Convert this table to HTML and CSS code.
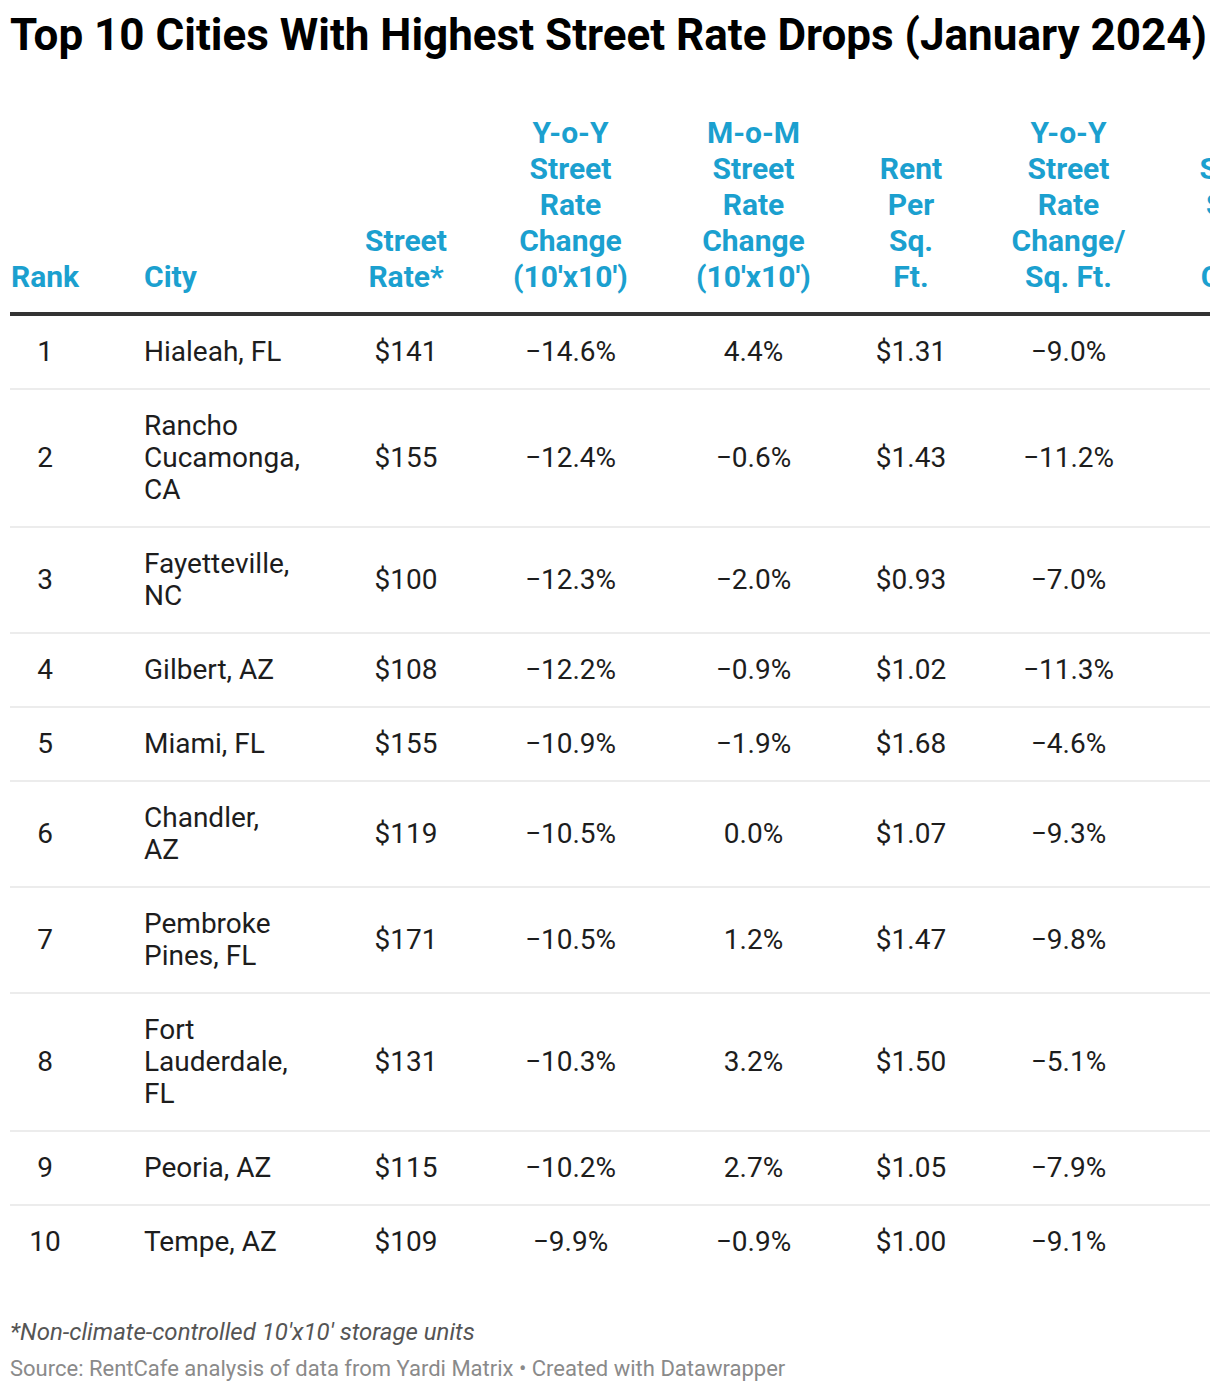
FILE: index.html
```html
<!DOCTYPE html>
<html lang="en">
<head>
<meta charset="utf-8">
<title>Top 10 Cities With Highest Street Rate Drops (January 2024)</title>
<link rel="stylesheet" href="styles.css">
</head>
<body>
<div class="chart">
  <h1 class="title">Top 10 Cities With Highest Street Rate Drops (January 2024)</h1>
  <div class="table-wrap">
    <table class="data">
      <thead>
        <tr>
          <th class="col-rank">Rank</th>
          <th class="col-city">City</th>
          <th class="col-rate">Street Rate*</th>
          <th class="col-yoy">Y-o-Y Street Rate Change (10'x10')</th>
          <th class="col-mom">M-o-M Street Rate Change (10'x10')</th>
          <th class="col-sqft">Rent Per Sq. Ft.</th>
          <th class="col-yoysq">Y-o-Y Street Rate Change/ Sq. Ft.</th>
          <th class="col-last">New Storage Supply % Change</th>
        </tr>
      </thead>
      <tbody>
        <tr><td>1</td><td>Hialeah, FL</td><td>$141</td><td>−14.6%</td><td>4.4%</td><td>$1.31</td><td>−9.0%</td><td>2.1%</td></tr>
        <tr><td>2</td><td>Rancho Cucamonga, CA</td><td>$155</td><td>−12.4%</td><td>−0.6%</td><td>$1.43</td><td>−11.2%</td><td>0.0%</td></tr>
        <tr><td>3</td><td>Fayetteville, NC</td><td>$100</td><td>−12.3%</td><td>−2.0%</td><td>$0.93</td><td>−7.0%</td><td>1.4%</td></tr>
        <tr><td>4</td><td>Gilbert, AZ</td><td>$108</td><td>−12.2%</td><td>−0.9%</td><td>$1.02</td><td>−11.3%</td><td>3.0%</td></tr>
        <tr><td>5</td><td>Miami, FL</td><td>$155</td><td>−10.9%</td><td>−1.9%</td><td>$1.68</td><td>−4.6%</td><td>1.8%</td></tr>
        <tr><td>6</td><td>Chandler, AZ</td><td>$119</td><td>−10.5%</td><td>0.0%</td><td>$1.07</td><td>−9.3%</td><td>2.6%</td></tr>
        <tr><td>7</td><td>Pembroke Pines, FL</td><td>$171</td><td>−10.5%</td><td>1.2%</td><td>$1.47</td><td>−9.8%</td><td>0.7%</td></tr>
        <tr><td>8</td><td>Fort Lauderdale, FL</td><td>$131</td><td>−10.3%</td><td>3.2%</td><td>$1.50</td><td>−5.1%</td><td>1.1%</td></tr>
        <tr><td>9</td><td>Peoria, AZ</td><td>$115</td><td>−10.2%</td><td>2.7%</td><td>$1.05</td><td>−7.9%</td><td>4.2%</td></tr>
        <tr><td>10</td><td>Tempe, AZ</td><td>$109</td><td>−9.9%</td><td>−0.9%</td><td>$1.00</td><td>−9.1%</td><td>2.3%</td></tr>
      </tbody>
    </table>
  </div>
  <p class="note">*Non-climate-controlled 10'x10' storage units</p>
  <p class="source">Source: RentCafe analysis of data from Yardi Matrix • Created with Datawrapper</p>
</div>
</body>
</html>
```

FILE: styles.css
```css
html, body {
  margin: 0;
  padding: 0;
  background: #ffffff;
}

body {
  font-family: Roboto, "Liberation Sans", Arial, sans-serif;
  color: #1d1d1d;
}

.chart {
  padding: 10px 10px 0 10px;
  width: 1200px;
}

.title {
  margin: 0;
  font-size: 44px;
  line-height: 50px;
  font-weight: 700;
  color: #000000;
  white-space: nowrap;
}

.table-wrap {
  width: 1200px;
  overflow: hidden;
}

.data {
  border-collapse: collapse;
  table-layout: fixed;
  width: 1301px;
}

.data th {
  font-size: 30px;
  line-height: 36px;
  font-weight: 700;
  color: #1ba0cf;
  text-align: center;
  vertical-align: bottom;
  padding-top: 55px;
  padding-bottom: 17px;
  padding-right: 0;
  border-bottom: 4px solid #333333;
}

.data td {
  font-size: 28px;
  line-height: 32px;
  text-align: center;
  vertical-align: middle;
  padding-top: 20px;
  padding-bottom: 20px;
  padding-right: 0;
  border-bottom: 2px solid #ececec;
}

.data tbody tr:last-child td {
  border-bottom: none;
}

/* column geometry: left gap + content width */
.data th:nth-child(1), .data td:nth-child(1) { padding-left: 0; }
.data th:nth-child(2), .data td:nth-child(2) { padding-left: 64px; text-align: left; }
.data th:nth-child(3), .data td:nth-child(3) { padding-left: 52px; }
.data th:nth-child(4), .data td:nth-child(4) { padding-left: 42px; }
.data th:nth-child(5), .data td:nth-child(5) { padding-left: 58px; }
.data th:nth-child(6), .data td:nth-child(6) { padding-left: 55px; }
.data th:nth-child(7), .data td:nth-child(7) { padding-left: 55px; }
.data th:nth-child(8), .data td:nth-child(8) { padding-left: 62px; }

.col-rank { width: 70px; }
.col-city { width: 150px; }
.col-rate { width: 120px; }
.col-yoy { width: 125px; }
.col-mom { width: 125px; }
.col-sqft { width: 80px; }
.col-yoysq { width: 125px; }
.col-last { width: 118px; }

.note {
  margin: 40px 0 0 0;
  font-size: 24px;
  line-height: 28px;
  font-style: italic;
  color: #555555;
}

.source {
  margin: 9px 0 0 0;
  font-size: 22px;
  line-height: 28px;
  color: #8a8a8a;
}
```
